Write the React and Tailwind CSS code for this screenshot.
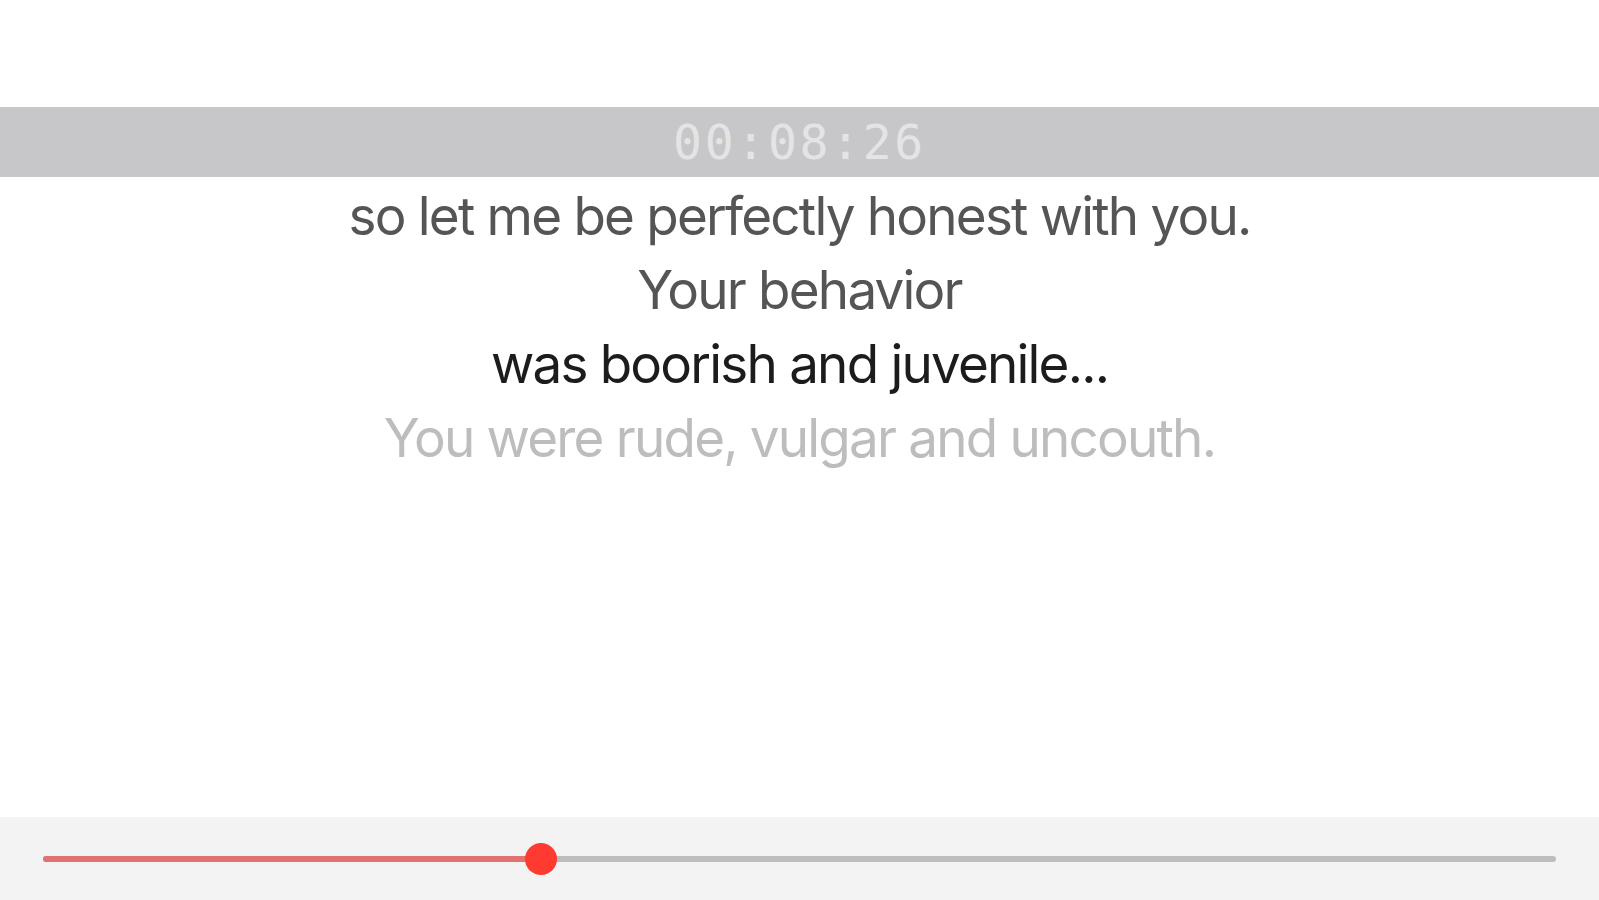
import React from "react";

export default function App() {
  const progress = 0.329;
  return (
    <div className="flex h-[900px] w-full flex-col bg-white" style={{ fontFamily: "Inter, 'Liberation Sans', sans-serif" }}>
      <div className="h-[107px] shrink-0" />
      <div className="flex h-[70px] shrink-0 items-center justify-center bg-[#c7c7c9]">
        <span
          className="text-[48px] leading-none tracking-[2.7px] text-[#e4e4e6]"
          style={{ fontFamily: "'DejaVu Sans Mono', monospace" }}
        >
          00:08:26
        </span>
      </div>
      <div className="flex flex-col items-center pt-[2px] text-[53px] leading-[74px] tracking-[-1.8px]">
        <p className="text-[#555555]">so let me be perfectly honest with you.</p>
        <p className="text-[#555555]">Your behavior</p>
        <p className="text-[#1c1c1c]">was boorish and juvenile...</p>
        <p className="text-[#bdbdbd]">You were rude, vulgar and uncouth.</p>
      </div>
      <div className="flex-1" />
      <div className="flex h-[83px] shrink-0 items-center bg-[#f3f3f3] px-[43px]">
        <div className="relative h-[6px] w-full rounded-full bg-[#bdbdbd]">
          <div
            className="absolute left-0 top-0 h-full rounded-full bg-[#e07272]"
            style={{ width: `${progress * 100}%` }}
          />
          <div
            className="absolute top-1/2 h-[32px] w-[32px] -translate-x-1/2 -translate-y-1/2 rounded-full bg-[#ff3a30]"
            style={{ left: `${progress * 100}%` }}
          />
        </div>
      </div>
    </div>
  );
}
